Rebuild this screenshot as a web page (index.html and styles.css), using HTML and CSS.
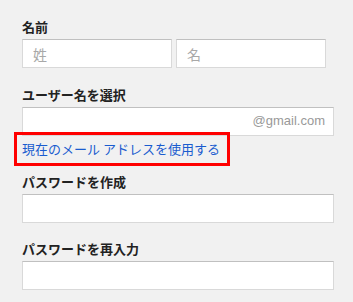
FILE: index.html
```html
<!DOCTYPE html>
<html lang="ja">
  <head>
    <meta charset="UTF-8" />
    <meta name="viewport" content="width=device-width, initial-scale=1.0" />
    <title>アカウント作成</title>
    <link rel="stylesheet" href="styles.css">
</head>
<body>
    <form class="signup">
        <div class="field field-name">
            <label class="label">名前</label>
            <div class="name-row">
                <input class="input input-half" type="text" placeholder="姓">
                <input class="input input-half" type="text" placeholder="名">
            </div>
        </div>

        <div class="field field-user">
            <label class="label">ユーザー名を選択</label>
            <div class="user-box">
                <input class="input input-user" type="text">
                <span class="domain">@gmail.com</span>
            </div>
            <div class="marker">
                <a class="link" href="#">現在のメール アドレスを使用する</a>
            </div>
        </div>

        <div class="field field-pass">
            <label class="label">パスワードを作成</label>
            <input class="input input-full" type="password">
        </div>

        <div class="field field-confirm">
            <label class="label">パスワードを再入力</label>
            <input class="input input-full" type="password">
        </div>
    </form>
</body>
</html>
```

FILE: styles.css
```css
body {
    margin: 0;
    background-color: #f1f1f1;
    font-family: "Noto Sans CJK JP", "Noto Sans", sans-serif;
}

.signup {
    padding: 19px 0 0 22px;
}

.field {
    display: flex;
    flex-direction: column;
    align-items: flex-start;
}

.label {
    font-size: 13px;
    line-height: 16px;
    font-weight: bold;
    color: #222;
    margin-bottom: 4px;
}

.field-user {
    margin-top: 19px;
}

.field-pass {
    margin-top: 8px;
}

.field-confirm {
    margin-top: 18px;
}

.input {
    box-sizing: border-box;
    height: 29px;
    margin: 0;
    padding: 0 10px;
    background: #fff;
    border: 1px solid #d9d9d9;
    border-top-color: #c0c0c0;
    border-radius: 0;
    font-size: 14px;
    font-family: "Noto Sans CJK JP", sans-serif;
    outline: none;
}

.input::placeholder {
    color: #a8a8a8;
}

.name-row {
    display: flex;
    gap: 4px;
}

.input-half {
    width: 150px;
}

.input-full {
    width: 312px;
}

.user-box {
    position: relative;
    width: 312px;
}

.input-user {
    width: 312px;
    display: block;
}

.domain {
    position: absolute;
    right: 9px;
    top: 6px;
    font-family: "Liberation Sans", Arial, sans-serif;
    font-size: 13px;
    line-height: 16px;
    color: #999;
}

.marker {
    position: relative;
    margin: -4px 0 0 -8px;
    width: 205px;
    height: 28px;
    border: 3px solid #f00;
    display: flex;
    align-items: center;
    padding-left: 5px;
}

.link {
    font-size: 13px;
    line-height: 16px;
    color: #1a5ccf;
    text-decoration: none;
}
```
